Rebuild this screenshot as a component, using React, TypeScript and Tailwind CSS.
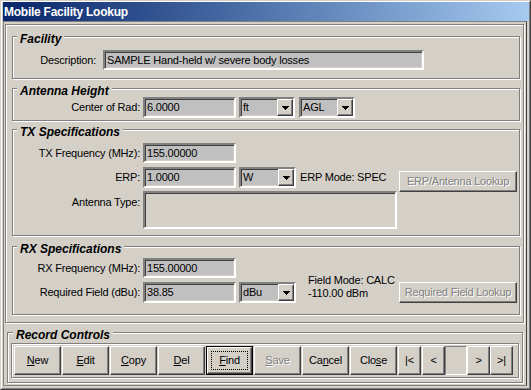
import React from 'react';

const sunken =
  'border-2 border-t-[#808080] border-l-[#808080] border-b-white border-r-white shadow-[inset_1px_1px_0_#404040,inset_-1px_-1px_0_#d4d0c8]';
const raised =
  'border border-t-white border-l-white border-b-[#404040] border-r-[#404040] shadow-[inset_-1px_-1px_0_#808080]';
const etched = 'border border-[#808080] shadow-[inset_1px_1px_0_#fff,1px_1px_0_#fff]';
const disabledText = 'text-[#808080] [text-shadow:1px_1px_0_#fff]';

function Group({ title, className, left = 'left-[4px]', children }: { title: string; className: string; left?: string; children?: React.ReactNode }) {
  return (
    <div className={`relative shrink-0 ${etched} ${className}`}>
      <span className={`absolute top-[-5px] ${left} px-[3px] bg-[#d4d0c8] text-[12px] leading-[14px] font-bold italic tracking-normal`}>
        {title}
      </span>
      {children}
    </div>
  );
}

function Label({ text, w }: { text: string; w: string }) {
  return <div className={`${w} shrink-0 text-right leading-[13px]`}>{text}</div>;
}

function Field({ value, className, bg = 'bg-[#c0c0c0]' }: { value?: string; className: string; bg?: string }) {
  return (
    <div className={`${sunken} ${bg} shrink-0 flex items-center pl-[2px] leading-[13px] ${className}`}>
      {value}
    </div>
  );
}

function Arrow() {
  return (
    <svg width="7" height="4" viewBox="0 0 7 4" shapeRendering="crispEdges">
      <rect x="0" y="0" width="7" height="1" fill="#000" />
      <rect x="1" y="1" width="5" height="1" fill="#000" />
      <rect x="2" y="2" width="3" height="1" fill="#000" />
      <rect x="3" y="3" width="1" height="1" fill="#000" />
    </svg>
  );
}

function Select({ value, className }: { value: string; className: string }) {
  return (
    <div className={`${sunken} bg-[#c0c0c0] shrink-0 flex h-[21px] ${className}`}>
      <div className="flex-1 flex items-center pl-[2px] leading-[13px]">{value}</div>
      <div className={`${raised} bg-[#d4d0c8] w-[16px] flex items-center justify-center`}>
        <Arrow />
      </div>
    </div>
  );
}

function Btn({ children, className = 'w-[47px]', disabled, isDefault }: { children: React.ReactNode; className?: string; disabled?: boolean; isDefault?: boolean }) {
  if (isDefault) {
    return (
      <div className={`border border-black shrink-0 flex ${className}`}>
        <div className={`${raised} flex-1 flex items-center justify-center p-[3px]`}>
          <div className="w-full h-full border border-dotted border-black flex items-center justify-center">{children}</div>
        </div>
      </div>
    );
  }
  return (
    <div className={`${raised} shrink-0 flex items-center justify-center bg-[#d4d0c8] ${disabled ? disabledText : ''} ${className}`}>
      {children}
    </div>
  );
}

export default function App() {
  return (
    <div className="w-[531px] h-[390px] overflow-hidden bg-[#d4d0c8] border border-t-[#d4d0c8] border-l-[#d4d0c8] border-r-[#404040] border-b-[#404040] font-['Liberation_Sans',Arial,sans-serif] text-[11px] tracking-[-0.2px] text-black">
      <div className="h-full border border-t-white border-l-white border-r-[#808080] border-b-[#808080] pl-[1px] pb-[2px] flex flex-col">
        <div className="h-[19px] shrink-0 bg-gradient-to-r from-[#0a246a] to-[#a6caf0] flex items-center pl-[1px]">
          <span className="text-white font-bold text-[12px] tracking-[-0.25px] leading-[14px]">Mobile Facility Lookup</span>
        </div>

        <div className="w-[524px] flex-1 border border-t-[#808080] border-l-[#808080] border-r-[#404040] border-b-[#808080] flex flex-col">
          <div className={`ml-[1px] mt-[2px] w-[519px] h-[299px] ${etched} flex flex-col`}>
            <Group title="Facility" className="ml-[6px] mt-[11px] w-[508px] h-[43px] pt-[13px]">
              <div className="flex items-center">
                <Label text="Description:" w="w-[83px]" />
                <Field value="SAMPLE Hand-held w/ severe body losses" className="ml-[7px] w-[321px] h-[20px]" />
              </div>
            </Group>

            <Group title="Antenna Height" className="ml-[6px] mt-[9px] w-[508px] h-[33px] pt-[8px]">
              <div className="flex items-center">
                <Label text="Center of Rad:" w="w-[127px]" />
                <Field value="6.0000" className="ml-[3px] w-[93px] h-[21px]" />
                <Select value="ft" className="ml-[3px] w-[56px]" />
                <Select value="AGL" className="ml-[4px] w-[56px]" />
              </div>
            </Group>

            <Group title="TX Specifications" className="ml-[6px] mt-[8px] w-[508px] h-[107px] pt-[13px]">
              <div className="flex items-center h-[20px]">
                <Label text="TX Frequency (MHz):" w="w-[127px]" />
                <Field value="155.00000" className="ml-[3px] w-[93px] h-[20px]" />
              </div>
              <div className="flex items-center h-[21px] mt-[4px]">
                <Label text="ERP:" w="w-[127px]" />
                <Field value="1.0000" className="ml-[3px] w-[93px] h-[21px]" />
                <Select value="W" className="ml-[3px] w-[57px]" />
                <span className="ml-[4px] leading-[13px]">ERP Mode: SPEC</span>
                <Btn className="self-start mt-[4px] h-[21px] w-[118px] ml-auto mr-[2px]" disabled>
                  ERP/Antenna Lookup
                </Btn>
              </div>
              <div className="flex items-start mt-[3px]">
                <div className="pt-[5px]">
                  <Label text="Antenna Type:" w="w-[127px]" />
                </div>
                <Field className="ml-[3px] w-[254px] h-[38px]" bg="bg-[#d4d0c8]" />
              </div>
            </Group>

            <Group title="RX Specifications" className="ml-[6px] mt-[10px] w-[508px] h-[69px] pt-[11px]">
              <div className="flex items-center h-[20px]">
                <Label text="RX Frequency (MHz):" w="w-[127px]" />
                <Field value="155.00000" className="ml-[3px] w-[93px] h-[20px]" />
              </div>
              <div className="flex items-center h-[21px] mt-[4px]">
                <Label text="Required Field (dBu):" w="w-[127px]" />
                <Field value="38.85" className="ml-[3px] w-[93px] h-[21px]" />
                <Select value="dBu" className="ml-[3px] w-[57px]" />
                <div className="ml-[12px] self-start -mt-[8px] leading-[13px] flex flex-col">
                  <span>Field Mode: CALC</span>
                  <span>-110.00 dBm</span>
                </div>
                <Btn className="self-start h-[21px] w-[118px] ml-auto mr-[2px]" disabled>
                  Required Field Lookup
                </Btn>
              </div>
            </Group>
          </div>

          <Group title="Record Controls" left="left-[5px]" className="ml-[3px] mt-[9px] w-[516px] h-[51px] pt-[10px] pl-[3px]">
            <div className={`w-[508px] h-[35px] ${etched} pt-[2px] pl-[2px] flex`}>
              <div className="flex h-[29px]">
                <Btn><span><u>N</u>ew</span></Btn>
                <Btn className="w-[47px] ml-[1px]"><span><u>E</u>dit</span></Btn>
                <Btn className="w-[47px] ml-[1px]"><span><u>C</u>opy</span></Btn>
                <Btn className="w-[47px] ml-[1px]"><span><u>D</u>el</span></Btn>
                <Btn className="w-[47px] ml-[1px]" isDefault><span><u>F</u>ind</span></Btn>
                <Btn className="w-[47px] ml-[1px]" disabled><span><u>S</u>ave</span></Btn>
                <Btn className="w-[47px] ml-[1px]"><span>Ca<u>n</u>cel</span></Btn>
                <Btn className="w-[47px] ml-[1px]"><span>Clo<u>s</u>e</span></Btn>
                <Btn className="w-[23px] ml-[1px]">|&lt;</Btn>
                <Btn className="w-[23px] ml-[1px]">&lt;</Btn>
                <div className="w-[22px] shrink-0 border border-t-[#808080] border-l-[#808080] border-b-white border-r-white" />
                <Btn className="w-[23px]">&gt;</Btn>
                <Btn className="w-[23px]">&gt;|</Btn>
              </div>
            </div>
          </Group>
        </div>
      </div>
    </div>
  );
}
